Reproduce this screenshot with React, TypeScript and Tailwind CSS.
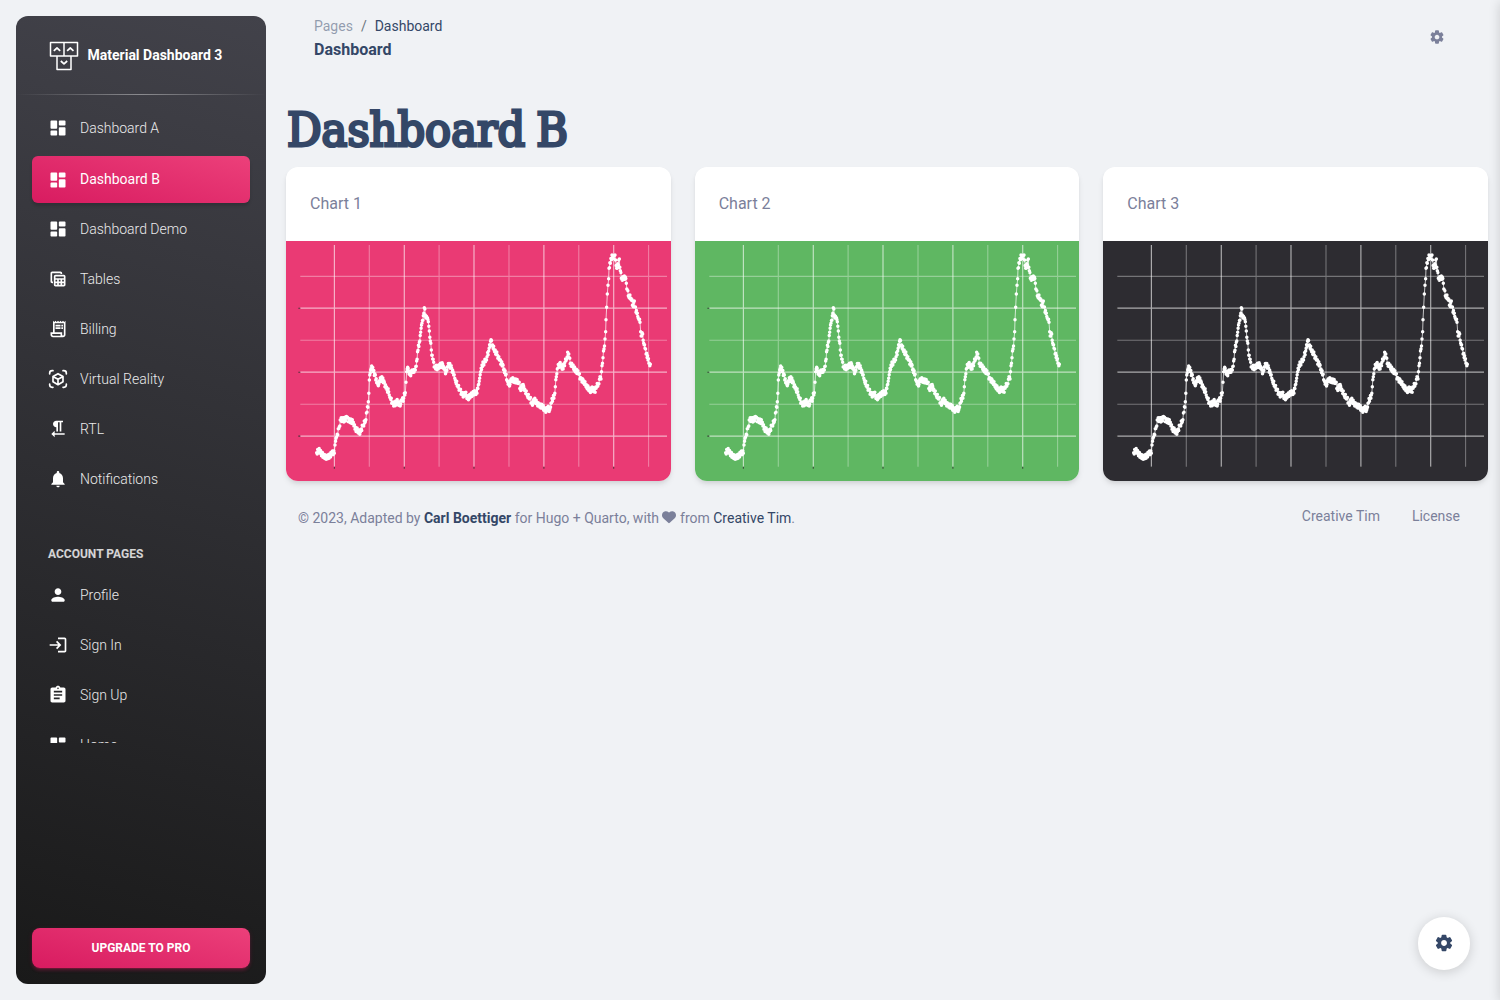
import type { ReactNode } from "react";
import {
  MdTableView,
  MdOutlineReceiptLong,
  MdFormatTextdirectionRToL,
  MdNotifications,
  MdLogin,
  MdAssignment,
} from "react-icons/md";

function DashboardIcon() {
  return (
    <svg viewBox="0 0 24 24" className="size-5" fill="currentColor">
      <path d="M4 13h6c.55 0 1-.45 1-1V4c0-.55-.45-1-1-1H4c-.55 0-1 .45-1 1v8c0 .55.45 1 1 1zm0 8h6c.55 0 1-.45 1-1v-4c0-.55-.45-1-1-1H4c-.55 0-1 .45-1 1v4c0 .55.45 1 1 1zm10 0h6c.55 0 1-.45 1-1v-8c0-.55-.45-1-1-1h-6c-.55 0-1 .45-1 1v8c0 .55.45 1 1 1zM13 4v4c0 .55.45 1 1 1h6c.55 0 1-.45 1-1V4c0-.55-.45-1-1-1h-6c-.55 0-1 .45-1 1z" />
    </svg>
  );
}

function CubeIcon() {
  return (
    <svg viewBox="0 0 24 24" className="size-5" fill="none" stroke="currentColor" strokeWidth="2" strokeLinecap="round" strokeLinejoin="round">
      <path d="M2 6V5a3 3 0 0 1 3-3h1M18 2h1a3 3 0 0 1 3 3v1M22 18v1a3 3 0 0 1-3 3h-1M6 22H5a3 3 0 0 1-3-3v-1" />
      <path d="M12 5.6 18 9v6.3l-6 3.5-6-3.5V9zM6.4 9.2 12 12.4l5.6-3.2M12 12.4v6" />
    </svg>
  );
}

function PersonIcon() {
  return (
    <svg viewBox="0 0 24 24" className="size-5" fill="currentColor">
      <path d="M12 12c2.21 0 4-1.79 4-4s-1.79-4-4-4-4 1.79-4 4 1.79 4 4 4zm0 2c-2.67 0-8 1.34-8 4v1c0 .55.45 1 1 1h14c.55 0 1-.45 1-1v-1c0-2.66-5.33-4-8-4z" />
    </svg>
  );
}

function GearIcon({ className }: { className: string }) {
  return (
    <svg viewBox="0 0 24 24" className={className} fill="currentColor">
      <path d="M19.5 12c0-.23-.01-.45-.03-.68l1.86-1.41c.4-.3.51-.86.26-1.3l-1.87-3.23a.987.987 0 0 0-1.25-.42l-2.15.91c-.37-.26-.76-.49-1.17-.68l-.29-2.31c-.06-.5-.49-.88-.99-.88h-3.73c-.51 0-.94.38-1 .88l-.29 2.31c-.41.19-.8.42-1.17.68l-2.15-.91c-.46-.2-1-.02-1.25.42L2.41 8.62c-.25.44-.14.99.26 1.3l1.86 1.41a7.343 7.343 0 0 0 0 1.35l-1.86 1.41c-.4.3-.51.86-.26 1.3l1.87 3.23c.25.44.79.62 1.25.42l2.15-.91c.37.26.76.49 1.17.68l.29 2.31c.06.5.49.88.99.88h3.73c.5 0 .93-.38.99-.88l.29-2.31c.41-.19.8-.42 1.17-.68l2.15.91c.46.2 1 .02 1.25-.42l1.87-3.23c.25-.44.14-.99-.26-1.3l-1.86-1.41c.03-.23.04-.45.04-.68zm-7.46 3.5c-1.93 0-3.5-1.57-3.5-3.5s1.57-3.5 3.5-3.5 3.5 1.57 3.5 3.5-1.57 3.5-3.5 3.5z" />
    </svg>
  );
}

function Logo() {
  return (
    <svg viewBox="0 0 30 30" className="mt-[2px] h-[30px] w-[30px]" fill="none" stroke="white" strokeWidth="1.5" strokeLinejoin="round">
      <path d="M1.5 1.5h13.500v13.500H1.500zM15 1.500h13.500v13.500H15zM8 15h14v13.500H8z" />
      <path d="M4.800 9.800 8 7l3.200 2.800M18.100 9.800l3.200-2.800 3.200 2.800M11.800 20l3.200 2.900 3.200-2.900" strokeWidth="1.700" />
    </svg>
  );
}

type Item = { label: string; icon: ReactNode; active?: boolean };

const mainItems: Item[] = [
  { label: "Dashboard A", icon: <DashboardIcon /> },
  { label: "Dashboard B", icon: <DashboardIcon />, active: true },
  { label: "Dashboard Demo", icon: <DashboardIcon /> },
  { label: "Tables", icon: <MdTableView size={20} /> },
  { label: "Billing", icon: <MdOutlineReceiptLong size={20} /> },
  { label: "Virtual Reality", icon: <CubeIcon /> },
  { label: "RTL", icon: <MdFormatTextdirectionRToL size={20} /> },
  { label: "Notifications", icon: <MdNotifications size={20} /> },
];

const accountItems: Item[] = [
  { label: "Profile", icon: <PersonIcon /> },
  { label: "Sign In", icon: <MdLogin size={20} /> },
  { label: "Sign Up", icon: <MdAssignment size={20} /> },
  { label: "Home", icon: <DashboardIcon /> },
];

function NavItem({ label, icon, active }: Item) {
  return (
    <a
      className={
        active
          ? "mx-4 mt-[2px] mb-[2px] flex h-[47px] shrink-0 items-center rounded-md bg-[linear-gradient(195deg,#EC407A,#D81B60)] px-4 text-white shadow-[0_3px_3px_0_rgba(0,0,0,0.15)]"
          : "mx-4 mb-[3px] flex h-[47px] shrink-0 items-center rounded-md px-4 text-white"
      }
    >
      <span className="flex w-5 justify-center">{icon}</span>
      <span className={active ? "-mt-px ml-3 text-[14px] font-normal leading-5" : "ml-3 text-[14px] font-light leading-5 opacity-90"}>{label}</span>
    </a>
  );
}

function Sidebar() {
  return (
    <aside className="m-4 flex h-[968px] w-[250px] shrink-0 flex-col rounded-xl bg-[linear-gradient(195deg,#42424a,#191919)]">
      <div className="flex h-[78px] shrink-0 items-center pl-[33px] text-white">
        <Logo />
        <span className="ml-[8.5px] text-[14px] font-bold leading-5">Material Dashboard 3</span>
      </div>
      <div className="h-px shrink-0 bg-[linear-gradient(90deg,rgba(255,255,255,0),rgba(255,255,255,0.4),rgba(255,255,255,0))]" />
      <nav className="flex h-[648px] shrink-0 flex-col overflow-hidden pt-[9px]">
        <div className="flex shrink-0 flex-col">
          {mainItems.map((item) => (
            <NavItem key={item.label} {...item} />
          ))}
        </div>
        <h6 className="mt-[39px] mb-[7px] pl-8 text-[12px] font-bold leading-5 text-white/80">ACCOUNT PAGES</h6>
        {accountItems.map((item) => (
          <NavItem key={item.label} {...item} />
        ))}
      </nav>
      <button className="mx-4 mt-auto mb-4 h-10 rounded-lg bg-[linear-gradient(195deg,#EC407A,#D81B60)] text-[12px] font-bold text-white shadow-[0_3px_3px_0_rgba(233,30,99,0.15),0_3px_1px_-2px_rgba(233,30,99,0.2),0_1px_5px_0_rgba(233,30,99,0.15)]">
        UPGRADE TO PRO
      </button>
    </aside>
  );
}

/* Measured series in thirds of a pixel: alternating x and y. */
const series = [
  92, 653, 98, 646, 105, 655, 112, 662, 122, 666, 132, 662, 138, 655, 145, 655, 147, 630, 152, 605, 160, 575, 164, 555,
  172, 555, 183, 549, 190, 556, 202, 562, 207, 583, 215, 586, 223, 592, 230, 572, 238, 560, 243, 532, 247, 500, 250, 435,
  254, 405, 257, 393, 262, 410, 268, 420, 272, 443, 277, 452, 280, 437, 289, 431, 295, 442, 300, 460, 308, 470, 313, 490,
  320, 504, 326, 508, 332, 498, 341, 512, 347, 498, 353, 490, 355, 475, 358, 473, 360, 442, 362, 410, 365, 397, 368, 408,
  374, 422, 378, 405, 384, 412, 388, 405, 392, 378, 396, 346, 400, 322, 404, 292, 408, 265, 412, 242, 415, 218, 418, 240,
  423, 248, 427, 260, 430, 288, 433, 318, 436, 345, 440, 372, 446, 395, 455, 400, 462, 392, 470, 388, 474, 402, 480, 412,
  484, 395, 490, 389, 497, 400, 503, 420, 508, 435, 515, 453, 522, 465, 530, 480, 538, 475, 546, 492, 553, 483, 560, 475,
  568, 470, 573, 475, 577, 450, 581, 430, 584, 410, 588, 390, 595, 382, 600, 375, 608, 348, 615, 314, 620, 330, 626, 350,
  634, 360, 640, 375, 650, 388, 654, 402, 659, 420, 665, 440, 672, 448, 676, 431, 686, 438, 698, 442, 703, 462, 710, 450,
  716, 462, 724, 482, 732, 490, 738, 507, 745, 493, 752, 503, 760, 514, 770, 515, 778, 527, 785, 517, 791, 525, 795, 505,
  801, 490, 805, 480, 808, 455, 811, 425, 814, 402, 821, 385, 830, 398, 837, 382, 842, 372, 845, 352, 850, 368, 854, 385,
  860, 395, 867, 405, 877, 415, 885, 432, 894, 438, 900, 455, 907, 460, 915, 469, 920, 457, 926, 470, 932, 455, 937, 448,
  942, 425, 945, 432, 948, 392, 951, 368, 954, 342, 957, 312, 959, 290, 960, 254, 962, 217, 964, 177, 966, 151, 968, 131,
  969, 100, 973, 85, 978, 60, 982, 70, 987, 60, 992, 100, 997, 90, 1000, 72, 1003, 107, 1006, 130, 1012, 133, 1018, 126,
  1021, 145, 1024, 165, 1027, 182, 1035, 190, 1042, 215, 1045, 198, 1050, 232, 1054, 235, 1058, 252, 1062, 262, 1064, 290,
  1067, 303, 1070, 297, 1073, 325, 1077, 340, 1082, 355, 1086, 375, 1090, 385, 1093, 388,
];

const points: [number, number][] = [];
for (let i = 0; i < series.length - 2; i += 2) {
  const [x0, y0, x1, y1] = series.slice(i, i + 4);
  const steps = Math.max(1, Math.round((x1 - x0) / 1.5));
  for (let s = 0; s < steps; s++) {
    const t = s / steps;
    const wobble = s === 0 ? 0 : Math.sin((i * 3 + s * 5) * 12.9898) * 7;
    points.push([(x0 + (x1 - x0) * t) / 3, (y0 + (y1 - y0) * t + wobble) / 3 - 6]);
  }
}
points.push([1093 / 3, 388 / 3 - 6]);

const linePath = points.map(([x, y], i) => `${i ? "L" : "M"}${x.toFixed(2)} ${y.toFixed(2)}`).join("");
const dotPath = points.map(([x, y]) => `M${x.toFixed(2)} ${y.toFixed(2)}h0`).join("");

const majorX = [48.4, 118.3, 188, 257.9, 327.7];
const minorX = [83.3, 153.1, 223, 292.8, 362.6];
const majorY = [67.2, 131.2, 195.1];
const minorY = [35.4, 99.3, 163.3];
const vertical = (xs: number[]) => xs.map((x) => `M${x} 4V225.7`).join("");
const horizontal = (ys: number[]) => ys.map((y) => `M14.3 ${y}H381`).join("");

function Plot() {
  return (
    <svg viewBox="0 0 384.67 240" className="block h-60 w-full" fill="none" stroke="white">
      <path d={vertical(minorX) + horizontal(minorY)} strokeWidth="1.1" strokeOpacity="0.34" />
      <path d={vertical(majorX) + horizontal(majorY)} strokeWidth="1.2" strokeOpacity="0.6" />
      <path
        d={majorY.map((y) => `M12.3 ${y}h2`).join("") + majorX.map((x) => `M${x} 225.7v2`).join("")}
        stroke="#333333"
        strokeWidth="1.1"
        strokeOpacity="0.8"
      />
      <path d={linePath} strokeWidth="0.8" strokeOpacity="0.9" />
      <path d={dotPath} strokeWidth="3.5" strokeLinecap="round" />
    </svg>
  );
}

const charts = [
  { title: "Chart 1", color: "bg-[#ea3a74]" },
  { title: "Chart 2", color: "bg-[#5fb762]" },
  { title: "Chart 3", color: "bg-[#2d2c31]" },
];

export default function App() {
  return (
    <div className="relative flex h-[1000px] w-full overflow-hidden bg-[#f0f2f5] font-[Roboto,sans-serif] text-[#7b809a]">
      <Sidebar />
      <main className="ml-1 mr-3 flex min-w-0 flex-1 flex-col">
        <header className="flex h-[90px] justify-between pl-7 pr-[43px] pt-4">
          <div>
            <div className="flex h-[21px] items-center text-[14px] leading-[21px]">
              <span className="text-[#344767]/50">Pages</span>
              <span className="px-2 text-[#6c757d]">/</span>
              <span className="text-[#344767]">Dashboard</span>
            </div>
            <h6 className="mt-[3px] text-[16px] font-bold leading-[20px] text-[#344767]">Dashboard</h6>
          </div>
          <GearIcon className="mt-[13px] size-4" />
        </header>
        <h1 className="mt-[10px] h-[60px] w-max origin-left scale-x-[0.94] whitespace-nowrap pl-px font-['DejaVu_Serif',serif] text-[46px] font-normal leading-[60px] text-[#344767] [word-spacing:-3px] [-webkit-text-stroke:3px_#344767]">
          Dashboard B
        </h1>
        <div className="mt-[7px] grid grid-cols-3 gap-6">
          {charts.map((c) => (
            <section
              key={c.title}
              className="overflow-hidden rounded-xl bg-white shadow-[0_4px_6px_-1px_rgba(0,0,0,0.1),0_2px_4px_-1px_rgba(0,0,0,0.06)]"
            >
              <div className="h-[74px] px-6 pt-6 text-[16px] leading-[26px]">{c.title}</div>
              <div className={c.color}>
                <Plot />
              </div>
            </section>
          ))}
        </div>
        <footer className="mt-[26px] flex justify-between pl-3 pr-7 text-[14px] leading-[21px]">
          <div className="flex whitespace-pre pt-[1px]">
            <span>© 2023, Adapted by </span>
            <b className="text-[#344767]">Carl Boettiger</b>
            <span> for Hugo + Quarto, with </span>
            <svg viewBox="0 0 512 512" className="-ml-px mr-px mt-[2px] size-[14px]" fill="currentColor">
              <path d="M47.6 300.4 228.3 469.1c7.5 7 17.4 10.9 27.7 10.9s20.2-3.9 27.7-10.9L464.4 300.4c30.4-28.3 47.6-68 47.6-109.5v-5.8c0-69.9-50.5-129.5-119.4-141C347 36.5 300.6 51.4 268 84l-12 12-12-12c-32.6-32.6-79-47.5-124.6-39.9C50.5 55.6 0 115.2 0 185.1v5.8c0 41.5 17.2 81.2 47.6 109.5z" />
            </svg>
            <span> from </span>
            <span className="text-[#344767]">Creative Tim</span>
            <span>.</span>
          </div>
          <div className="-mt-px flex gap-8">
            <span>Creative Tim</span>
            <span>License</span>
          </div>
        </footer>
      </main>
      <button className="absolute bottom-[30px] right-[30px] flex h-[53px] w-[52px] items-center justify-center rounded-full bg-white pb-px text-[#344767] shadow-[0_2px_12px_0_rgba(0,0,0,0.16)]">
        <GearIcon className="size-5" />
      </button>
      <div className="absolute -right-2.5 top-0 h-full w-2.5 bg-white shadow-[0_2px_12px_0_rgba(0,0,0,0.16)]" />
    </div>
  );
}
